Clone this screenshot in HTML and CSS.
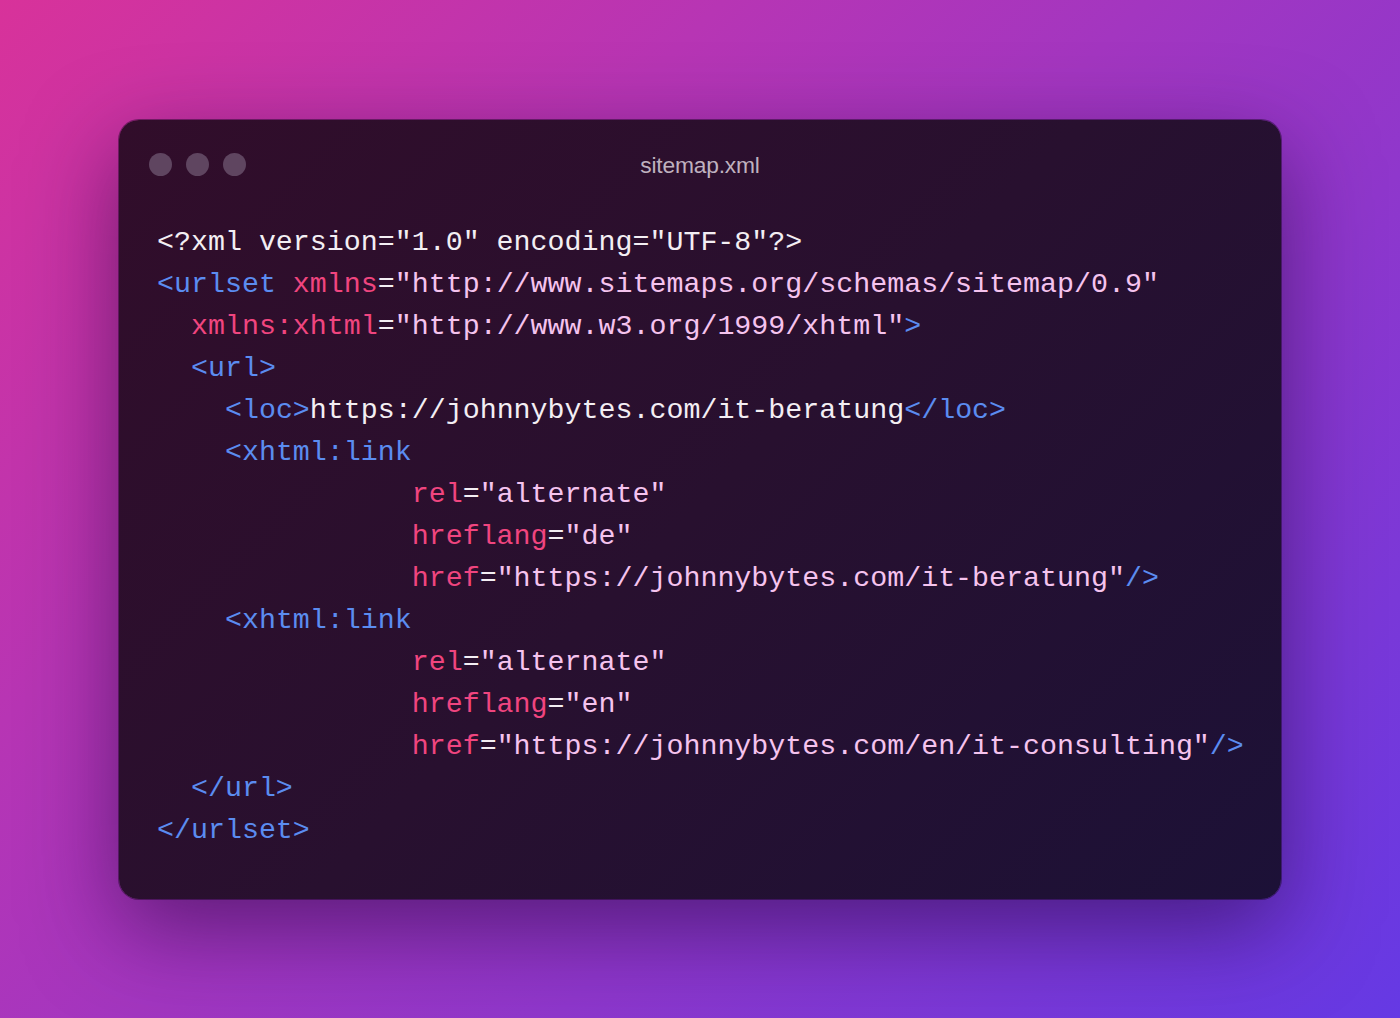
FILE: index.html
```html
<!DOCTYPE html>
<html lang="en">
<head>
<meta charset="utf-8">
<title>sitemap.xml</title>
<link rel="stylesheet" href="styles.css">
</head>
<body>
<div class="window">
  <div class="titlebar">
    <div class="dots"><span class="dot"></span><span class="dot"></span><span class="dot"></span></div>
    <div class="title">sitemap.xml</div>
  </div>
<pre class="code"><span class="p">&lt;?xml version="1.0" encoding="UTF-8"?&gt;</span>
<span class="t">&lt;urlset</span> <span class="a">xmlns</span><span class="p">=</span><span class="s">"http://www.sitemaps.org/schemas/sitemap/0.9"</span>
  <span class="a">xmlns:xhtml</span><span class="p">=</span><span class="s">"http://www.w3.org/1999/xhtml"</span><span class="t">&gt;</span>
  <span class="t">&lt;url&gt;</span>
    <span class="t">&lt;loc&gt;</span><span class="p">https://johnnybytes.com/it-beratung</span><span class="t">&lt;/loc&gt;</span>
    <span class="t">&lt;xhtml:link</span>
               <span class="a">rel</span><span class="p">=</span><span class="s">"alternate"</span>
               <span class="a">hreflang</span><span class="p">=</span><span class="s">"de"</span>
               <span class="a">href</span><span class="p">=</span><span class="s">"https://johnnybytes.com/it-beratung"</span><span class="t">/&gt;</span>
    <span class="t">&lt;xhtml:link</span>
               <span class="a">rel</span><span class="p">=</span><span class="s">"alternate"</span>
               <span class="a">hreflang</span><span class="p">=</span><span class="s">"en"</span>
               <span class="a">href</span><span class="p">=</span><span class="s">"https://johnnybytes.com/en/it-consulting"</span><span class="t">/&gt;</span>
  <span class="t">&lt;/url&gt;</span>
<span class="t">&lt;/urlset&gt;</span></pre>
</div>
</body>
</html>
```

FILE: styles.css
```css
html, body {
  margin: 0;
  padding: 0;
  height: 100%;
}
body {
  width: 1400px;
  height: 1018px;
  overflow: hidden;
  display: flex;
  align-items: center;
  justify-content: center;
  background: linear-gradient(135deg, #d8329a 0%, #b735b4 30%, #8f37cc 65%, #6539e4 100%);
}
.window {
  width: 1162px;
  height: 779px;
  box-sizing: border-box;
  border-radius: 20px;
  background: linear-gradient(135deg, #310d2a 0%, #28102f 50%, #1c1137 100%);
  box-shadow: 0 0 0 1px rgba(25, 5, 35, 0.45), 0 30px 90px rgba(35, 5, 60, 0.55);
  display: flex;
  flex-direction: column;
}
.titlebar {
  height: 90px;
  flex: none;
  position: relative;
  display: flex;
  align-items: center;
  justify-content: center;
}
.dots {
  position: absolute;
  left: 30px;
  top: 33px;
  display: flex;
  gap: 14px;
}
.dot {
  width: 23px;
  height: 23px;
  border-radius: 50%;
  background: #5f4560;
}
.title {
  font-family: "Liberation Sans", Arial, sans-serif;
  font-size: 22.8px;
  color: #bfb1bf;
  letter-spacing: -0.2px;
  margin-top: 2px;
}
.code {
  margin: 0;
  padding: 11px 30px 48px 38px;
  font-family: "Liberation Mono", "Courier New", monospace;
  font-size: 28.3px;
  line-height: 42px;
  white-space: pre;
  color: #f3eef3;
}
.p { color: #f3eef3; }
.t { color: #5b8cf0; }
.a { color: #f0457f; }
.s { color: #f5c3ee; }
```
